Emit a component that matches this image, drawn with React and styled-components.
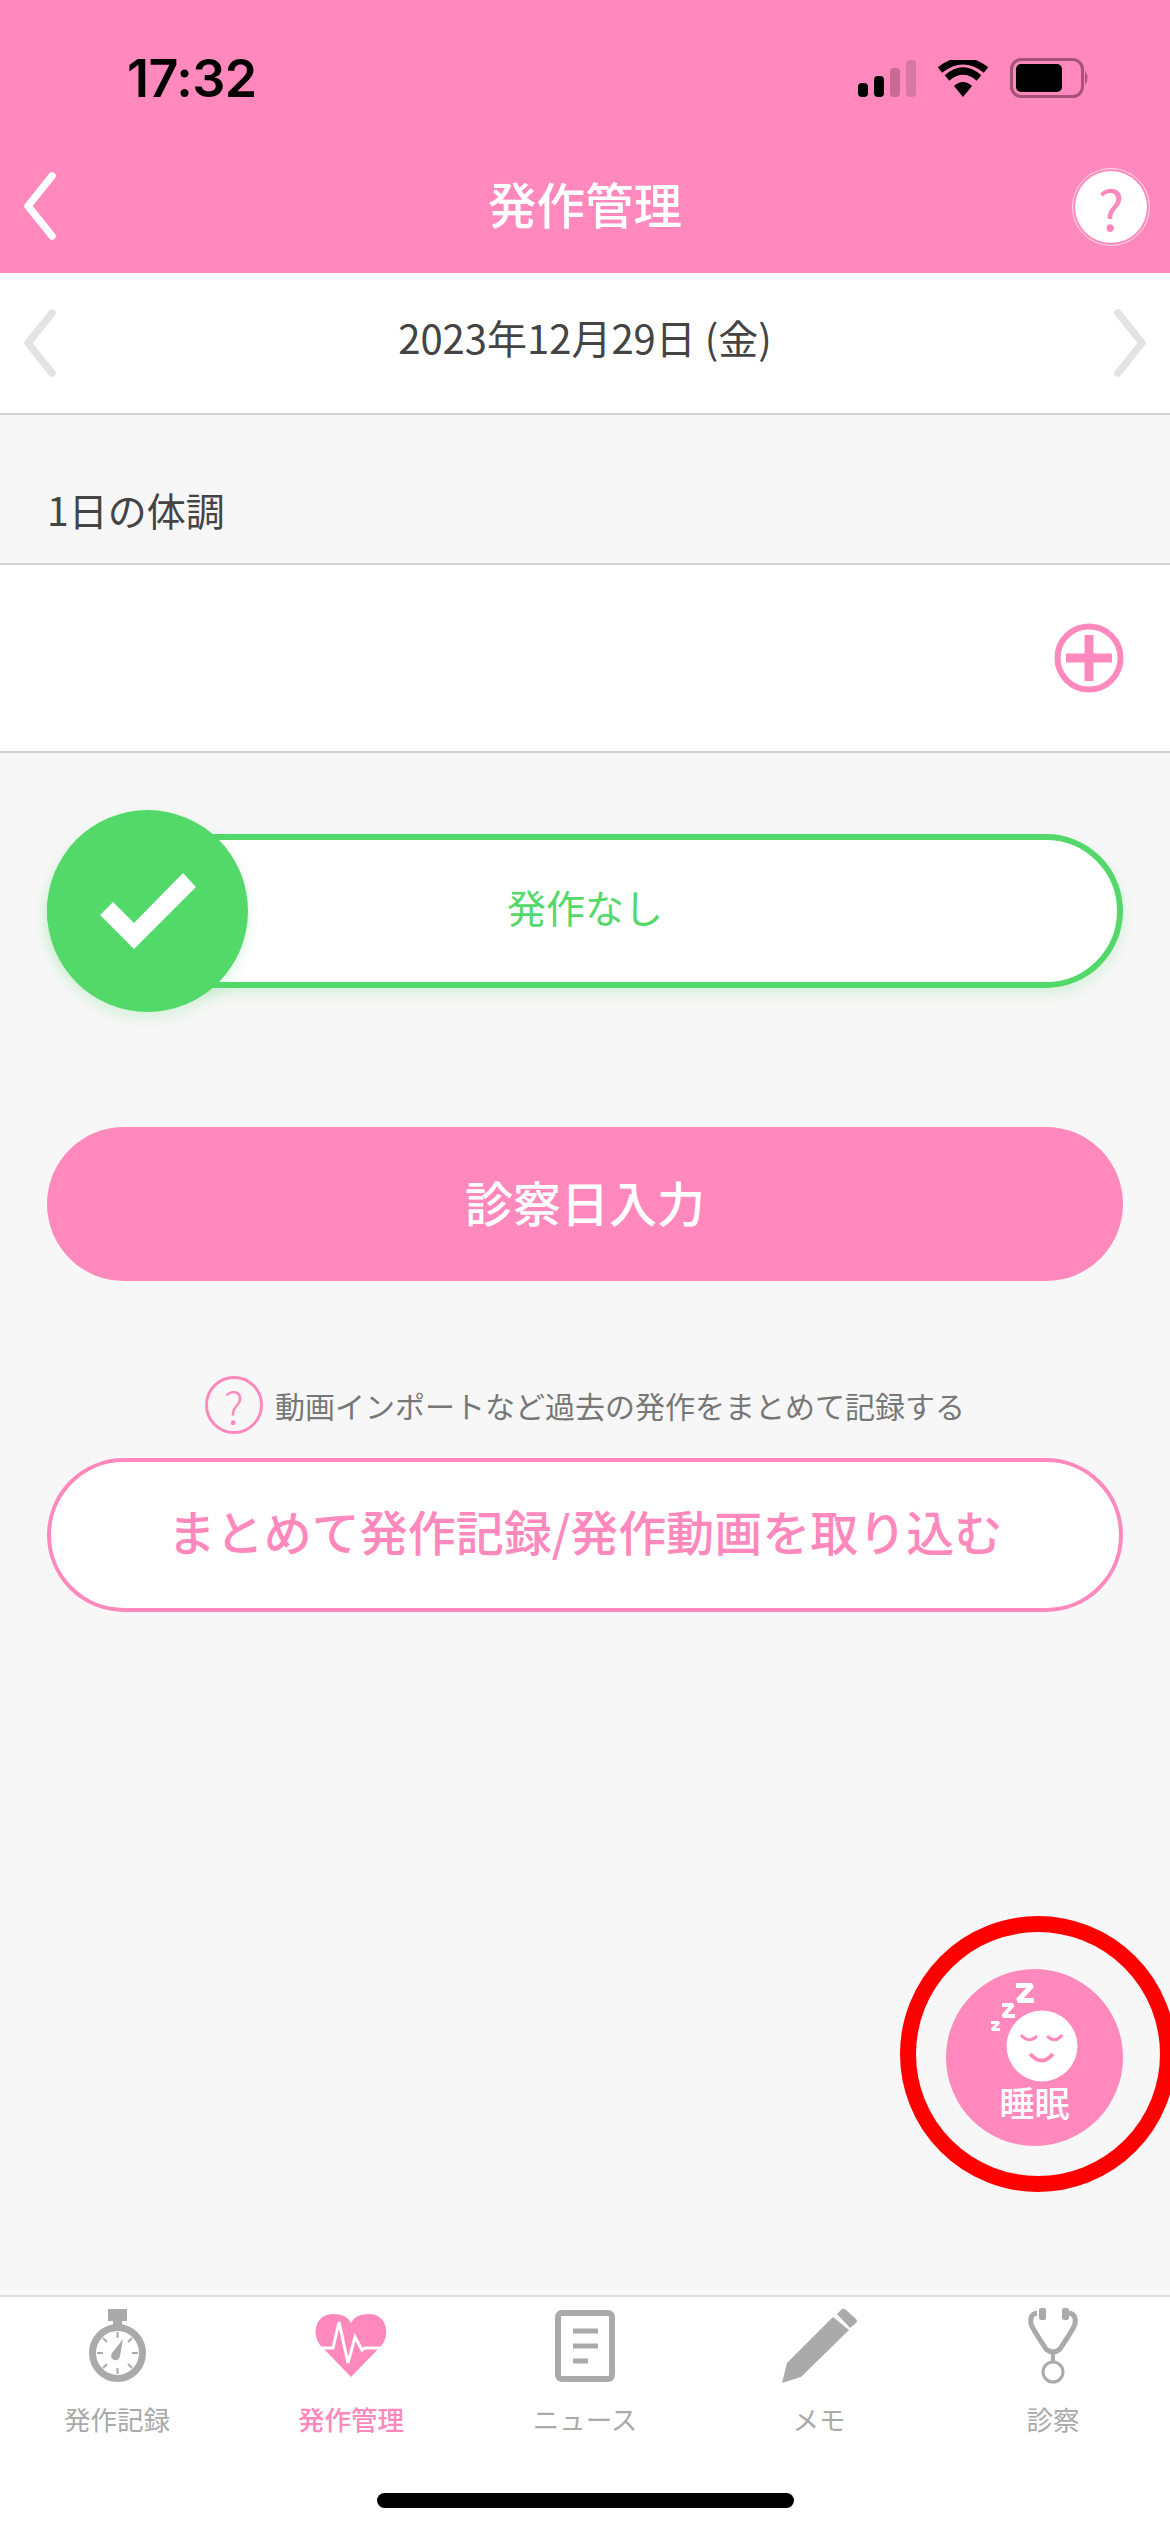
import React from 'react';
import styled, { createGlobalStyle } from 'styled-components';

const pink = '#ff89bd';
const green = '#53d86a';
const gray = '#aaaaaa';

const GlobalStyle = createGlobalStyle`
  html, body {
    margin: 0;
    padding: 0;
    background: #f7f7f7;
  }
  body {
    font-family: "Noto Sans CJK JP", "Noto Sans", sans-serif;
    overflow: hidden;
  }
`;

const Page = styled.div`
  width: 1170px;
  height: 2532px;
  display: flex;
  flex-direction: column;
  overflow: hidden;
`;

const Header = styled.header`
  height: 273px;
  background: ${pink};
  display: flex;
  flex-direction: column;
  flex-shrink: 0;
`;

const StatusBar = styled.div`
  height: 156px;
  display: flex;
  align-items: center;
  justify-content: space-between;
  padding: 0 80px 0 127px;
`;

const Clock = styled.span`
  font-family: Inter, sans-serif;
  font-size: 52px;
  font-weight: 600;
  letter-spacing: -0.5px;
  color: #000;
`;

const StatusIcons = styled.div`
  display: flex;
  align-items: center;
  gap: 22px;
`;

const NavBar = styled.div`
  height: 99px;
  display: grid;
  grid-template-columns: 1fr auto 1fr;
  align-items: center;
  padding: 0 23px;
`;

const NavTitle = styled.h1`
  margin: 0 0 6px;
  font-size: 48.5px;
  line-height: 60px;
  font-weight: 500;
  color: #fff;
`;

const HelpButton = styled.div`
  justify-self: end;
  width: 72px;
  height: 72px;
  margin-top: 3px;
  border-radius: 50%;
  background: #fff;
  outline: 1px solid rgba(255, 255, 255, 0.7);
  outline-offset: 2px;
  display: flex;
  align-items: center;
  justify-content: center;
  font-size: 56px;
  line-height: 1;
  color: ${pink};
`;

const Main = styled.main`
  position: relative;
  flex: 1;
  background: #f7f7f7;
  display: flex;
  flex-direction: column;
`;

const DateBar = styled.div`
  height: 140px;
  background: #fff;
  border-bottom: 2px solid #d0d0d0;
  display: flex;
  align-items: center;
  justify-content: space-between;
  padding: 0 23px;
`;

const DateText = styled.span`
  margin-bottom: 12px;
  font-size: 40px;
  line-height: 50px;
  color: #444;
`;

const SectionTitle = styled.h2`
  margin: 0;
  height: 148px;
  padding: 69px 0 0 47px;
  box-sizing: border-box;
  font-size: 39px;
  line-height: 50px;
  font-weight: 400;
  color: #444;
`;

const ConditionRow = styled.div`
  height: 186px;
  background: #fff;
  border-top: 2px solid #d0d0d0;
  border-bottom: 2px solid #d0d0d0;
  display: flex;
  align-items: center;
  justify-content: flex-end;
  padding: 0 46px 0 0;
`;

const Toggle = styled.div`
  position: relative;
  height: 202px;
  margin: 57px 47px 0;
  display: flex;
  align-items: center;
`;

const TogglePill = styled.div`
  flex: 1;
  height: 154px;
  box-sizing: border-box;
  padding-bottom: 10px;
  background: #fff;
  border: 6px solid ${green};
  border-radius: 77px;
  box-shadow: 0 6px 14px rgba(83, 216, 106, 0.2);
  display: flex;
  align-items: center;
  justify-content: center;
  font-size: 39px;
  color: ${green};
`;

const ToggleKnob = styled.div`
  position: absolute;
  left: 0;
  top: 0;
  width: 201px;
  height: 202px;
  border-radius: 50%;
  background: ${green};
  box-shadow: 0 6px 14px rgba(83, 216, 106, 0.2);
  display: flex;
  align-items: center;
  justify-content: center;
`;

const PrimaryButton = styled.div`
  height: 154px;
  box-sizing: border-box;
  margin: 115px 47px 0;
  padding-bottom: 7px;
  border-radius: 77px;
  background: ${pink};
  display: flex;
  align-items: center;
  justify-content: center;
  font-size: 48px;
  font-weight: 500;
  color: #fff;
`;

const HelperRow = styled.div`
  margin-top: 94px;
  height: 59px;
  display: flex;
  align-items: center;
  justify-content: center;
  gap: 12px;
  font-size: 30px;
  line-height: 44px;
  color: #777;
`;

const HelperMark = styled.span`
  width: 58px;
  height: 58px;
  box-sizing: border-box;
  border: 3px solid ${pink};
  border-radius: 50%;
  display: flex;
  align-items: center;
  justify-content: center;
  font-size: 44px;
  font-weight: 300;
  color: ${pink};
`;

const OutlineButton = styled.div`
  height: 154px;
  box-sizing: border-box;
  margin: 24px 47px 0;
  padding-bottom: 10px;
  border: 4px solid ${pink};
  border-radius: 77px;
  background: #fff;
  display: flex;
  align-items: center;
  justify-content: center;
  font-size: 48px;
  font-weight: 500;
  color: ${pink};
`;

const Highlight = styled.div`
  position: absolute;
  right: -6px;
  bottom: 103px;
  width: 276px;
  height: 276px;
  box-sizing: border-box;
  border: 16px solid #ff0000;
  border-radius: 50%;
`;

const SleepButton = styled.div`
  position: absolute;
  right: 47px;
  bottom: 149px;
  width: 177px;
  height: 177px;
  border-radius: 50%;
  background: ${pink};
  display: flex;
  flex-direction: column;
  align-items: center;
  color: #fff;
`;

const SleepLabel = styled.span`
  margin-top: -7px;
  font-size: 35px;
  line-height: 50px;
  font-weight: 500;
`;

const TabBar = styled.nav`
  height: 237px;
  flex-shrink: 0;
  box-sizing: border-box;
  position: relative;
  background: #fff;
  border-top: 2px solid #dddddd;
  display: grid;
  grid-template-columns: repeat(5, 234px);
  align-content: start;
`;

const Tab = styled.div`
  display: flex;
  flex-direction: column;
  align-items: center;
  padding-top: 11px;
  color: ${({ $active }) => ($active ? pink : gray)};
`;

const TabLabel = styled.span`
  margin-top: 15px;
  font-size: 26.5px;
  line-height: 40px;
  font-weight: ${({ $active }) => ($active ? 500 : 400)};
`;

const HomeIndicator = styled.div`
  position: absolute;
  left: 377px;
  bottom: 24px;
  width: 417px;
  height: 15px;
  border-radius: 8px;
  background: #000;
`;

const Chevron = ({ dir = 'left', color }) => (
  <svg width="34" height="68" viewBox="0 0 34 68">
    <path
      d={dir === 'left' ? 'M29 4 L5 34 L29 64' : 'M5 4 L29 34 L5 64'}
      fill="none"
      stroke={color}
      strokeWidth="7.5"
      strokeLinecap="round"
      strokeLinejoin="round"
    />
  </svg>
);

const SignalIcon = () => (
  <svg width="58" height="37" viewBox="0 0 58 37">
    <rect x="0" y="23" width="10" height="14" rx="4" fill="#000" />
    <rect x="16" y="16" width="10" height="21" rx="4" fill="#000" />
    <rect x="32" y="8" width="10" height="29" rx="4" fill="#c96a95" />
    <rect x="48" y="0" width="10" height="37" rx="4" fill="#d877a6" />
  </svg>
);

const WifiIcon = () => (
  <svg width="50" height="37" viewBox="0 0 50 37">
    <path d="M25 37 L16 26 Q25 18 34 26 Z" fill="#000" />
    <path d="M9 18 Q25 4 41 18" fill="none" stroke="#000" strokeWidth="7" />
    <path d="M2 10 Q25 -8 48 10" fill="none" stroke="#000" strokeWidth="7" />
  </svg>
);

const BatteryIcon = () => (
  <svg width="80" height="40" viewBox="0 0 80 40">
    <rect x="1.5" y="1.5" width="71" height="37" rx="10" fill="none" stroke="#a55277" strokeWidth="3" />
    <rect x="6" y="6" width="46" height="28" rx="5" fill="#000" />
    <path d="M75 13 Q80 20 75 27 Z" fill="#a55277" />
  </svg>
);

const PlusIcon = () => (
  <svg width="70" height="70" viewBox="0 0 70 70">
    <circle cx="35" cy="35" r="31.5" fill="none" stroke={pink} strokeWidth="6" />
    <path d="M35 12 V58 M12 35 H58" fill="none" stroke={pink} strokeWidth="9" />
  </svg>
);

const CheckIcon = () => (
  <svg width="96" height="76" viewBox="0 0 96 76">
    <polygon points="83,0 96,14 34,76 0,42 13,29 34,50" fill="#fff" />
  </svg>
);

const SleepIcon = () => (
  <svg width="177" height="115" viewBox="0 0 177 115">
    <circle cx="96" cy="77" r="35.5" fill="#fff" />
    <g fill="none" stroke="#fff" strokeLinejoin="bevel">
      <path d="M70 16.5 H86 L72 31.5 H88" strokeWidth="5" />
      <path d="M56 36 H67 L57 47 H69" strokeWidth="4" />
      <path d="M45 53.5 H53 L46 60.5 H54" strokeWidth="2.8" />
    </g>
    <path d="M75 66 Q83 75 91 67 M101 67 Q109 75 116 66" fill="none" stroke={pink} strokeWidth="3" />
    <path d="M84 85 Q96 98 107 85" fill="none" stroke={pink} strokeWidth="4" />
  </svg>
);

const StopwatchIcon = () => (
  <svg width="80" height="76" viewBox="0 0 80 76">
    <rect x="31" y="1" width="19" height="12" fill={gray} />
    <rect x="36" y="12" width="9" height="6" fill={gray} />
    <ellipse cx="40.5" cy="45" rx="25" ry="25.5" fill="none" stroke={gray} strokeWidth="7" />
    <path
      d="M40.5 24 V30 M40.5 60 V66 M20 45 H26 M55 45 H61 M26 30 L30 34 M55 30 L51 34 M26 60 L30 56 M55 60 L51 56"
      stroke={gray}
      strokeWidth="2"
    />
    <path d="M46 31 L43 48 A4.5 4.5 0 1 1 35 45 Z" fill={gray} />
  </svg>
);

const HeartIcon = () => (
  <svg width="80" height="76" viewBox="0 0 80 76">
    <path
      d="M40 69 L11 39 C0 29 3 6 22 6 C31 6 37 9 40 15 C43 9 49 6 58 6 C77 6 80 29 69 39 Z"
      fill={pink}
    />
    <path
      d="M4 40 H22 L28 14 L37 55 L44 29 L51 42 L54 40 H76"
      fill="none"
      stroke="#fff"
      strokeWidth="3"
    />
  </svg>
);

const NewsIcon = () => (
  <svg width="80" height="76" viewBox="0 0 80 76">
    <rect x="13" y="5" width="54" height="66" rx="4" fill="none" stroke={gray} strokeWidth="6" />
    <path d="M28 23 H53 M28 38 H53 M28 53 H43" stroke={gray} strokeWidth="5" />
  </svg>
);

const PenIcon = () => (
  <svg width="80" height="76" viewBox="0 0 80 76">
    <polygon points="3,75 8,55 54,9 70,22 22,69" fill={gray} />
    <path d="M58 6 L63 1 Q65 0 67 2 L77 11 Q79 13 77 15 L71 20 Z" fill={gray} />
  </svg>
);

const StethoscopeIcon = () => (
  <svg width="80" height="76" viewBox="0 0 80 76">
    <path
      d="M24 5 C18 6 17 11 18 16 C20 22 28 33 33 41 Q40 47 47 41 C52 33 60 22 62 16 C63 11 62 6 56 5"
      fill="none"
      stroke={gray}
      strokeWidth="5"
    />
    <path d="M40 45 V54" stroke={gray} strokeWidth="4" />
    <circle cx="40" cy="64" r="10" fill="none" stroke={gray} strokeWidth="3" />
    <rect x="26" y="0" width="7" height="12" rx="2" fill={gray} />
    <rect x="49" y="0" width="7" height="12" rx="2" fill={gray} />
  </svg>
);

const tabs = [
  { label: '発作記録', icon: <StopwatchIcon /> },
  { label: '発作管理', icon: <HeartIcon />, active: true },
  { label: 'ニュース', icon: <NewsIcon /> },
  { label: 'メモ', icon: <PenIcon /> },
  { label: '診察', icon: <StethoscopeIcon /> }
];

const App = () => (
  <Page>
    <GlobalStyle />
    <Header>
      <StatusBar>
        <Clock>17:32</Clock>
        <StatusIcons>
          <SignalIcon />
          <WifiIcon />
          <BatteryIcon />
        </StatusIcons>
      </StatusBar>
      <NavBar>
        <Chevron color="#fff" />
        <NavTitle>発作管理</NavTitle>
        <HelpButton>?</HelpButton>
      </NavBar>
    </Header>
    <Main>
      <DateBar>
        <Chevron color="#e3e3e3" />
        <DateText>2023年12月29日 (金)</DateText>
        <Chevron dir="right" color="#e3e3e3" />
      </DateBar>
      <SectionTitle>1日の体調</SectionTitle>
      <ConditionRow>
        <PlusIcon />
      </ConditionRow>
      <Toggle>
        <TogglePill>発作なし</TogglePill>
        <ToggleKnob>
          <CheckIcon />
        </ToggleKnob>
      </Toggle>
      <PrimaryButton>診察日入力</PrimaryButton>
      <HelperRow>
        <HelperMark>?</HelperMark>
        動画インポートなど過去の発作をまとめて記録する
      </HelperRow>
      <OutlineButton>まとめて発作記録/発作動画を取り込む</OutlineButton>
      <Highlight />
      <SleepButton>
        <SleepIcon />
        <SleepLabel>睡眠</SleepLabel>
      </SleepButton>
    </Main>
    <TabBar>
      {tabs.map(({ label, icon, active }) => (
        <Tab key={label} $active={active}>
          {icon}
          <TabLabel $active={active}>{label}</TabLabel>
        </Tab>
      ))}
      <HomeIndicator />
    </TabBar>
  </Page>
);

export default App;
